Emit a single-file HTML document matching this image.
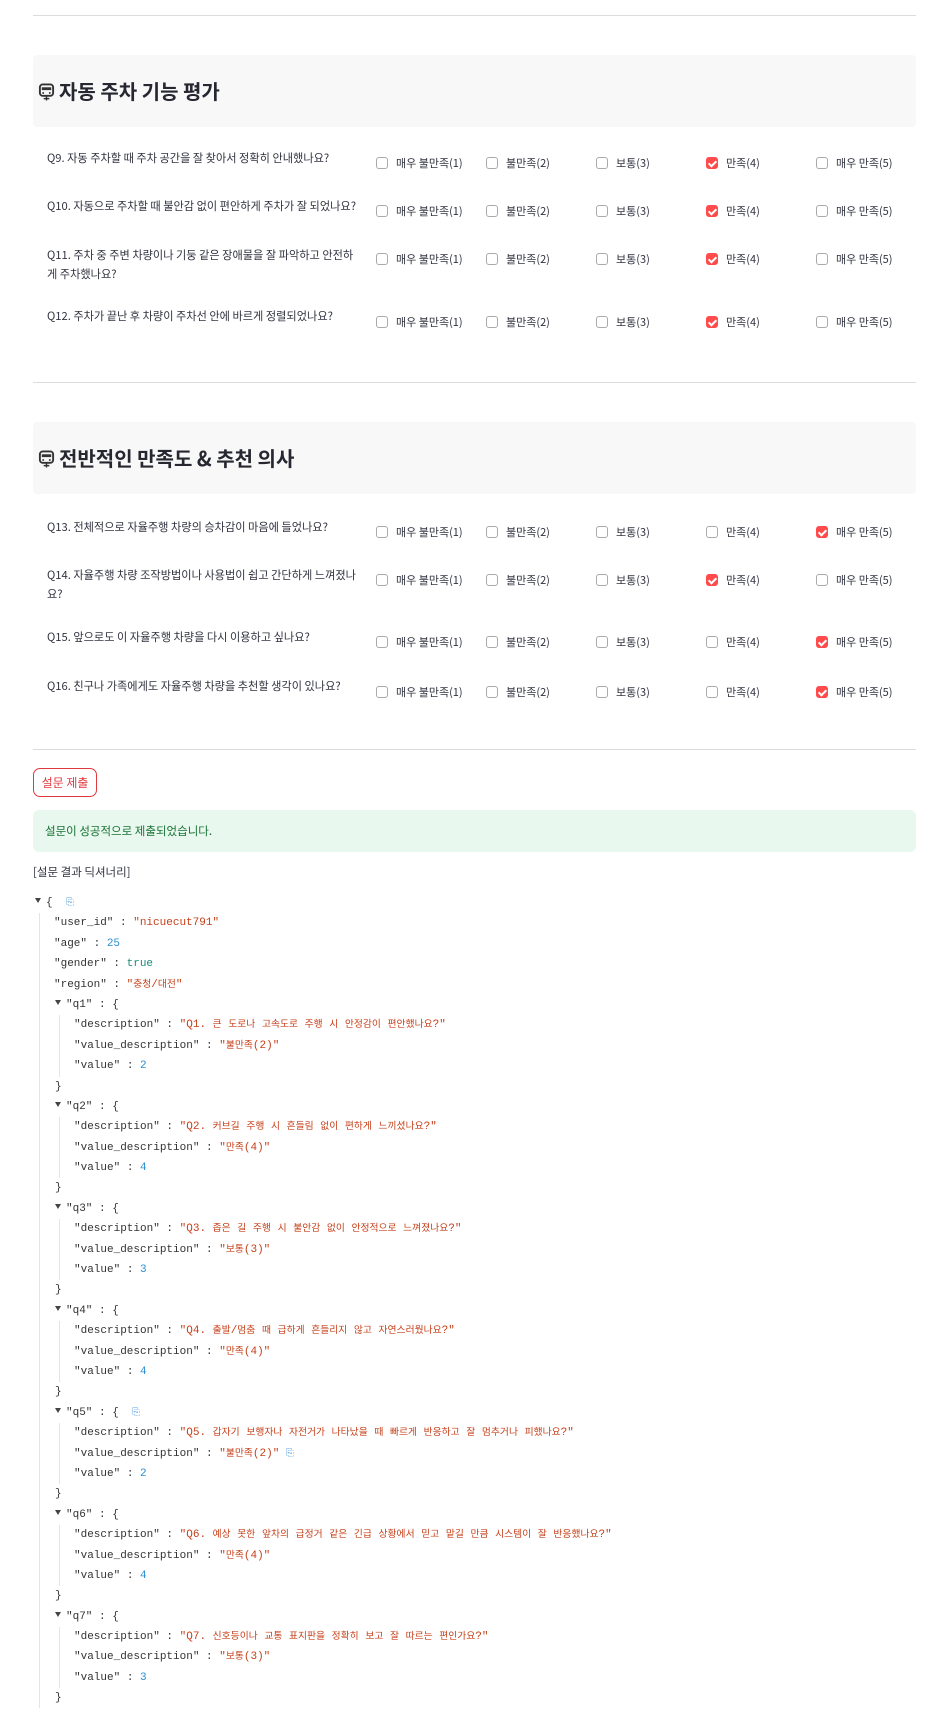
<!DOCTYPE html>
<html><head><meta charset="utf-8"><style>
*{margin:0;padding:0;box-sizing:border-box}
body{width:946px;height:1710px;background:#fff;font-family:"Liberation Sans","Noto Sans CJK KR",sans-serif;color:#31333f;position:relative;overflow:hidden}
.hr{position:absolute;left:33px;width:883px;height:1px;background:#dcdcdc}
.hdr{position:absolute;left:33px;width:883px;height:72px;background:#f8f8f9;border-radius:4px}
.hdr h2{position:absolute;left:5px;top:0;line-height:72px;font-size:20px;font-weight:700;color:#262730;font-family:"Noto Sans CJK KR",sans-serif}
.hdr svg{vertical-align:-3px;margin-right:4px}
.q{position:absolute;left:47px;width:312px;font-size:11.2px;line-height:19px;font-family:"Noto Sans CJK KR",sans-serif}
.o{position:absolute;font-size:11px;font-family:"Noto Sans CJK KR",sans-serif;line-height:14px;white-space:nowrap}
.o i{position:absolute;left:0;top:1px;width:12px;height:12px;border:1px solid #aaa;border-radius:3px;background:#fff}
.o i.c{background:#ff4b4b;border-color:#ff4b4b}
.o i.c:after{content:"";position:absolute;left:3px;top:1px;width:3px;height:6px;border:solid #fff;border-width:0 2px 2px 0;transform:rotate(45deg)}
.o span{position:absolute;left:20px;top:0}
.btn{position:absolute;left:33px;top:768px;width:64px;height:29px;border:1px solid #e0393e;border-radius:7px;color:#e0393e;font-size:12px;line-height:27px;text-align:center;font-family:"Noto Sans CJK KR",sans-serif}
.ok{position:absolute;left:33px;top:810px;width:883px;height:42px;background:#e8f8ee;border-radius:6px;color:#177233;font-size:11.5px;line-height:42px;padding-left:12px;font-family:"Noto Sans CJK KR",sans-serif}
.lbl{position:absolute;left:33px;top:864px;font-size:11.5px;font-family:"Noto Sans CJK KR",sans-serif}
.json{position:absolute;left:0;top:893px;font-family:"Liberation Mono","Noto Sans CJK KR",monospace;font-size:11px;color:#333}
.l{height:20.4px;line-height:20.4px;white-space:pre;position:relative}
.k{color:#333}.s{color:#c6401a}.n{color:#2a8fd0}.b{color:#1a8a7a}
.h{font-size:9.8px}
.t{display:inline-block;width:0;height:0;border-left:3.5px solid transparent;border-right:3.5px solid transparent;border-top:5px solid #444;vertical-align:2px;margin-right:5px}
.vl{position:absolute;width:1px;background:#e4e4e4}
.cp{color:#5aa0e0;font-size:10px}
.n2{border-left:1px solid #e4e4e4;margin-left:59px;padding-left:14px}
</style></head><body>
<div class="hr" style="top:15px"></div>
<div class="hdr" style="top:55px"><h2><svg width="17" height="20" viewBox="0 0 18 20"><rect x="2" y="2" width="14" height="12" rx="3" fill="none" stroke="#333" stroke-width="2"/><rect x="4" y="5" width="10" height="3" fill="#333"/><circle cx="5.5" cy="11" r="1" fill="#333"/><circle cx="12.5" cy="11" r="1" fill="#333"/><path d="M9 14v5M6 17h6" stroke="#333" stroke-width="1.5"/></svg>자동 주차 기능 평가</h2></div>

<div class="hr" style="top:382px"></div>
<div class="hdr" style="top:422px"><h2><svg width="17" height="20" viewBox="0 0 18 20"><rect x="2" y="2" width="14" height="12" rx="3" fill="none" stroke="#333" stroke-width="2"/><rect x="4" y="5" width="10" height="3" fill="#333"/><circle cx="5.5" cy="11" r="1" fill="#333"/><circle cx="12.5" cy="11" r="1" fill="#333"/><path d="M9 14v5M6 17h6" stroke="#333" stroke-width="1.5"/></svg>전반적인 만족도 &amp; 추천 의사</h2></div>
<div class="hr" style="top:749px"></div>

<div class="q" style="top:149px">Q9. 자동 주차할 때 주차 공간을 잘 찾아서 정확히 안내했나요?</div>
<div class="q" style="top:197px">Q10. 자동으로 주차할 때 불안감 없이 편안하게 주차가 잘 되었나요?</div>
<div class="q" style="top:246px">Q11. 주차 중 주변 차량이나 기둥 같은 장애물을 잘 파악하고 안전하게 주차했나요?</div>
<div class="q" style="top:307px">Q12. 주차가 끝난 후 차량이 주차선 안에 바르게 정렬되었나요?</div>
<div class="q" style="top:518px">Q13. 전체적으로 자율주행 차량의 승차감이 마음에 들었나요?</div>
<div class="q" style="top:566px">Q14. 자율주행 차량 조작방법이나 사용법이 쉽고 간단하게 느껴졌나요?</div>
<div class="q" style="top:628px">Q15. 앞으로도 이 자율주행 차량을 다시 이용하고 싶나요?</div>
<div class="q" style="top:677px">Q16. 친구나 가족에게도 자율주행 차량을 추천할 생각이 있나요?</div>

<div style="position:absolute;top:156px;left:0">
<div class="o" style="left:376px"><i></i><span>매우 불만족(1)</span></div><div class="o" style="left:486px"><i></i><span>불만족(2)</span></div><div class="o" style="left:596px"><i></i><span>보통(3)</span></div><div class="o" style="left:706px"><i class="c"></i><span>만족(4)</span></div><div class="o" style="left:816px"><i></i><span>매우 만족(5)</span></div></div>
<div style="position:absolute;top:204px;left:0">
<div class="o" style="left:376px"><i></i><span>매우 불만족(1)</span></div><div class="o" style="left:486px"><i></i><span>불만족(2)</span></div><div class="o" style="left:596px"><i></i><span>보통(3)</span></div><div class="o" style="left:706px"><i class="c"></i><span>만족(4)</span></div><div class="o" style="left:816px"><i></i><span>매우 만족(5)</span></div></div>
<div style="position:absolute;top:252px;left:0">
<div class="o" style="left:376px"><i></i><span>매우 불만족(1)</span></div><div class="o" style="left:486px"><i></i><span>불만족(2)</span></div><div class="o" style="left:596px"><i></i><span>보통(3)</span></div><div class="o" style="left:706px"><i class="c"></i><span>만족(4)</span></div><div class="o" style="left:816px"><i></i><span>매우 만족(5)</span></div></div>
<div style="position:absolute;top:315px;left:0">
<div class="o" style="left:376px"><i></i><span>매우 불만족(1)</span></div><div class="o" style="left:486px"><i></i><span>불만족(2)</span></div><div class="o" style="left:596px"><i></i><span>보통(3)</span></div><div class="o" style="left:706px"><i class="c"></i><span>만족(4)</span></div><div class="o" style="left:816px"><i></i><span>매우 만족(5)</span></div></div>
<div style="position:absolute;top:525px;left:0">
<div class="o" style="left:376px"><i></i><span>매우 불만족(1)</span></div><div class="o" style="left:486px"><i></i><span>불만족(2)</span></div><div class="o" style="left:596px"><i></i><span>보통(3)</span></div><div class="o" style="left:706px"><i></i><span>만족(4)</span></div><div class="o" style="left:816px"><i class="c"></i><span>매우 만족(5)</span></div></div>
<div style="position:absolute;top:573px;left:0">
<div class="o" style="left:376px"><i></i><span>매우 불만족(1)</span></div><div class="o" style="left:486px"><i></i><span>불만족(2)</span></div><div class="o" style="left:596px"><i></i><span>보통(3)</span></div><div class="o" style="left:706px"><i class="c"></i><span>만족(4)</span></div><div class="o" style="left:816px"><i></i><span>매우 만족(5)</span></div></div>
<div style="position:absolute;top:635px;left:0">
<div class="o" style="left:376px"><i></i><span>매우 불만족(1)</span></div><div class="o" style="left:486px"><i></i><span>불만족(2)</span></div><div class="o" style="left:596px"><i></i><span>보통(3)</span></div><div class="o" style="left:706px"><i></i><span>만족(4)</span></div><div class="o" style="left:816px"><i class="c"></i><span>매우 만족(5)</span></div></div>
<div style="position:absolute;top:685px;left:0">
<div class="o" style="left:376px"><i></i><span>매우 불만족(1)</span></div><div class="o" style="left:486px"><i></i><span>불만족(2)</span></div><div class="o" style="left:596px"><i></i><span>보통(3)</span></div><div class="o" style="left:706px"><i></i><span>만족(4)</span></div><div class="o" style="left:816px"><i class="c"></i><span>매우 만족(5)</span></div></div>

<div class="btn">설문 제출</div>
<div class="ok">설문이 성공적으로 제출되었습니다.</div>
<div class="lbl">[설문 결과 딕셔너리]</div>

<div class="json">
<div class="vl" style="left:39px;top:20px;height:795px"></div>
<div class="l" style="padding-left:35px"><span class="t"></span>{  <span class="cp">⎘</span></div>
<div class="l" style="padding-left:54px"><span class="k">"user_id"</span> : <span class="s">"nicuecut791"</span></div>
<div class="l" style="padding-left:54px"><span class="k">"age"</span> : <span class="n">25</span></div>
<div class="l" style="padding-left:54px"><span class="k">"gender"</span> : <span class="b">true</span></div>
<div class="l" style="padding-left:54px"><span class="k">"region"</span> : <span class="s">"충청/대전"</span></div>

<div class="l" style="padding-left:55px"><span class="t"></span>"q1" : {</div>
<div class="l n2"><span class="k">"description"</span> : <span class="s">"Q1. 큰 도로나 고속도로 주행 시 안정감이 편안했나요?"</span></div>
<div class="l n2"><span class="k">"value_description"</span> : <span class="s">"불만족(2)"</span></div>
<div class="l n2"><span class="k">"value"</span> : <span class="n">2</span></div>
<div class="l" style="padding-left:55px">}</div>

<div class="l" style="padding-left:55px"><span class="t"></span>"q2" : {</div>
<div class="l n2"><span class="k">"description"</span> : <span class="s">"Q2. 커브길 주행 시 흔들림 없이 편하게 느끼셨나요?"</span></div>
<div class="l n2"><span class="k">"value_description"</span> : <span class="s">"만족(4)"</span></div>
<div class="l n2"><span class="k">"value"</span> : <span class="n">4</span></div>
<div class="l" style="padding-left:55px">}</div>

<div class="l" style="padding-left:55px"><span class="t"></span>"q3" : {</div>
<div class="l n2"><span class="k">"description"</span> : <span class="s">"Q3. 좁은 길 주행 시 불안감 없이 안정적으로 느껴졌나요?"</span></div>
<div class="l n2"><span class="k">"value_description"</span> : <span class="s">"보통(3)"</span></div>
<div class="l n2"><span class="k">"value"</span> : <span class="n">3</span></div>
<div class="l" style="padding-left:55px">}</div>

<div class="l" style="padding-left:55px"><span class="t"></span>"q4" : {</div>
<div class="l n2"><span class="k">"description"</span> : <span class="s">"Q4. 출발/멈춤 때 급하게 흔들리지 않고 자연스러웠나요?"</span></div>
<div class="l n2"><span class="k">"value_description"</span> : <span class="s">"만족(4)"</span></div>
<div class="l n2"><span class="k">"value"</span> : <span class="n">4</span></div>
<div class="l" style="padding-left:55px">}</div>

<div class="l" style="padding-left:55px"><span class="t"></span>"q5" : {  <span class="cp">⎘</span></div>
<div class="l n2"><span class="k">"description"</span> : <span class="s">"Q5. 갑자기 보행자나 자전거가 나타났을 때 빠르게 반응하고 잘 멈추거나 피했나요?"</span></div>
<div class="l n2"><span class="k">"value_description"</span> : <span class="s">"불만족(2)"</span> <span class="cp">⎘</span></div>
<div class="l n2"><span class="k">"value"</span> : <span class="n">2</span></div>
<div class="l" style="padding-left:55px">}</div>

<div class="l" style="padding-left:55px"><span class="t"></span>"q6" : {</div>
<div class="l n2"><span class="k">"description"</span> : <span class="s">"Q6. 예상 못한 앞차의 급정거 같은 긴급 상황에서 믿고 맡길 만큼 시스템이 잘 반응했나요?"</span></div>
<div class="l n2"><span class="k">"value_description"</span> : <span class="s">"만족(4)"</span></div>
<div class="l n2"><span class="k">"value"</span> : <span class="n">4</span></div>
<div class="l" style="padding-left:55px">}</div>

<div class="l" style="padding-left:55px"><span class="t"></span>"q7" : {</div>
<div class="l n2"><span class="k">"description"</span> : <span class="s">"Q7. 신호등이나 교통 표지판을 정확히 보고 잘 따르는 편인가요?"</span></div>
<div class="l n2"><span class="k">"value_description"</span> : <span class="s">"보통(3)"</span></div>
<div class="l n2"><span class="k">"value"</span> : <span class="n">3</span></div>
<div class="l" style="padding-left:55px">}</div>
</div>
<script>
document.querySelectorAll('.json .s').forEach(function(e){e.innerHTML=e.textContent.replace(/([\uAC00-\uD7A3]+)/g,'<span class="h">$1</span>');});
</script>
</body></html>
